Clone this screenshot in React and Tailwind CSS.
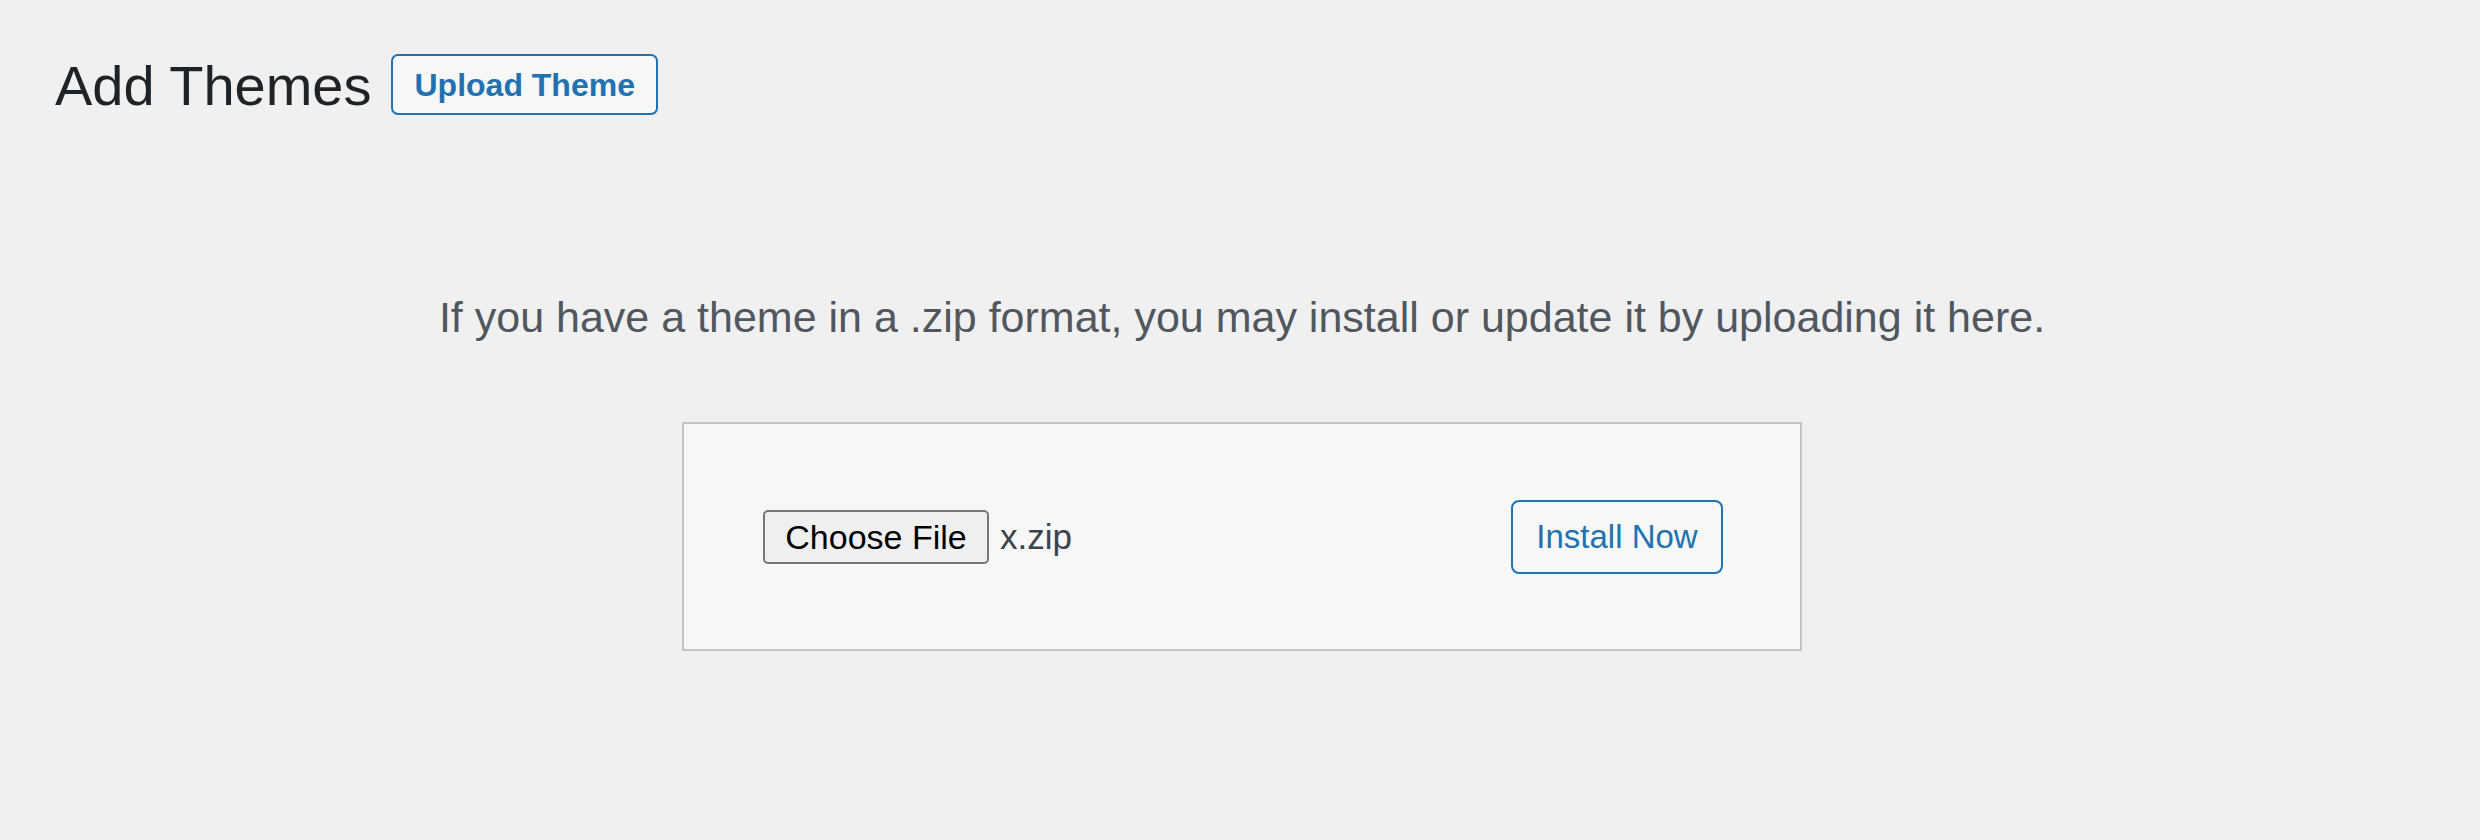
import React from 'react';

const App = () => {
    return (
        <div
            className="min-h-[840px] w-full bg-[#f0f0f1]"
            style={{ fontFamily: '"Liberation Sans", Arial, sans-serif' }}
        >
            {/* Title row */}
            <div className="flex items-center gap-[20px] pl-[55px] pt-[54px]">
                <h1 className="mt-[3px] text-[56px] leading-[56px] font-normal text-[#1d2327]">Add Themes</h1>
                <button
                    type="button"
                    className="h-[61px] px-[21px] border-2 border-[#2271b1] rounded-[7px] bg-[#f6f7f7] text-[#2271b1] text-[32px] font-bold leading-none"
                >
                    Upload Theme
                </button>
            </div>

            {/* Help text */}
            <p className="mt-[181px] pl-[4px] text-center text-[43px] leading-[42px] text-[#50575e]">
                If you have a theme in a .zip format, you may install or update it by uploading it here.
            </p>

            {/* Upload form */}
            <div className="mt-[84px] flex justify-center pl-[4px]">
                <div className="flex h-[229px] w-[1120px] items-center justify-between border-2 border-[#c3c4c7] bg-[#f6f7f7] pl-[79px] pr-[77px]">
                    <div className="flex items-center">
                        <button
                            type="button"
                            className="h-[54px] w-[226px] border-2 border-[#767676] rounded-[5px] bg-[#efefef] text-[34px] leading-none text-black"
                        >
                            Choose File
                        </button>
                        <span className="ml-[11px] text-[35px] leading-none text-[#3c434a]">x.zip</span>
                    </div>
                    <button
                        type="button"
                        className="h-[74px] w-[212px] border-2 border-[#2271b1] rounded-[8px] bg-[#f6f7f7] text-[33px] leading-none text-[#2271b1]"
                    >
                        Install Now
                    </button>
                </div>
            </div>
        </div>
    );
};

export default App;
